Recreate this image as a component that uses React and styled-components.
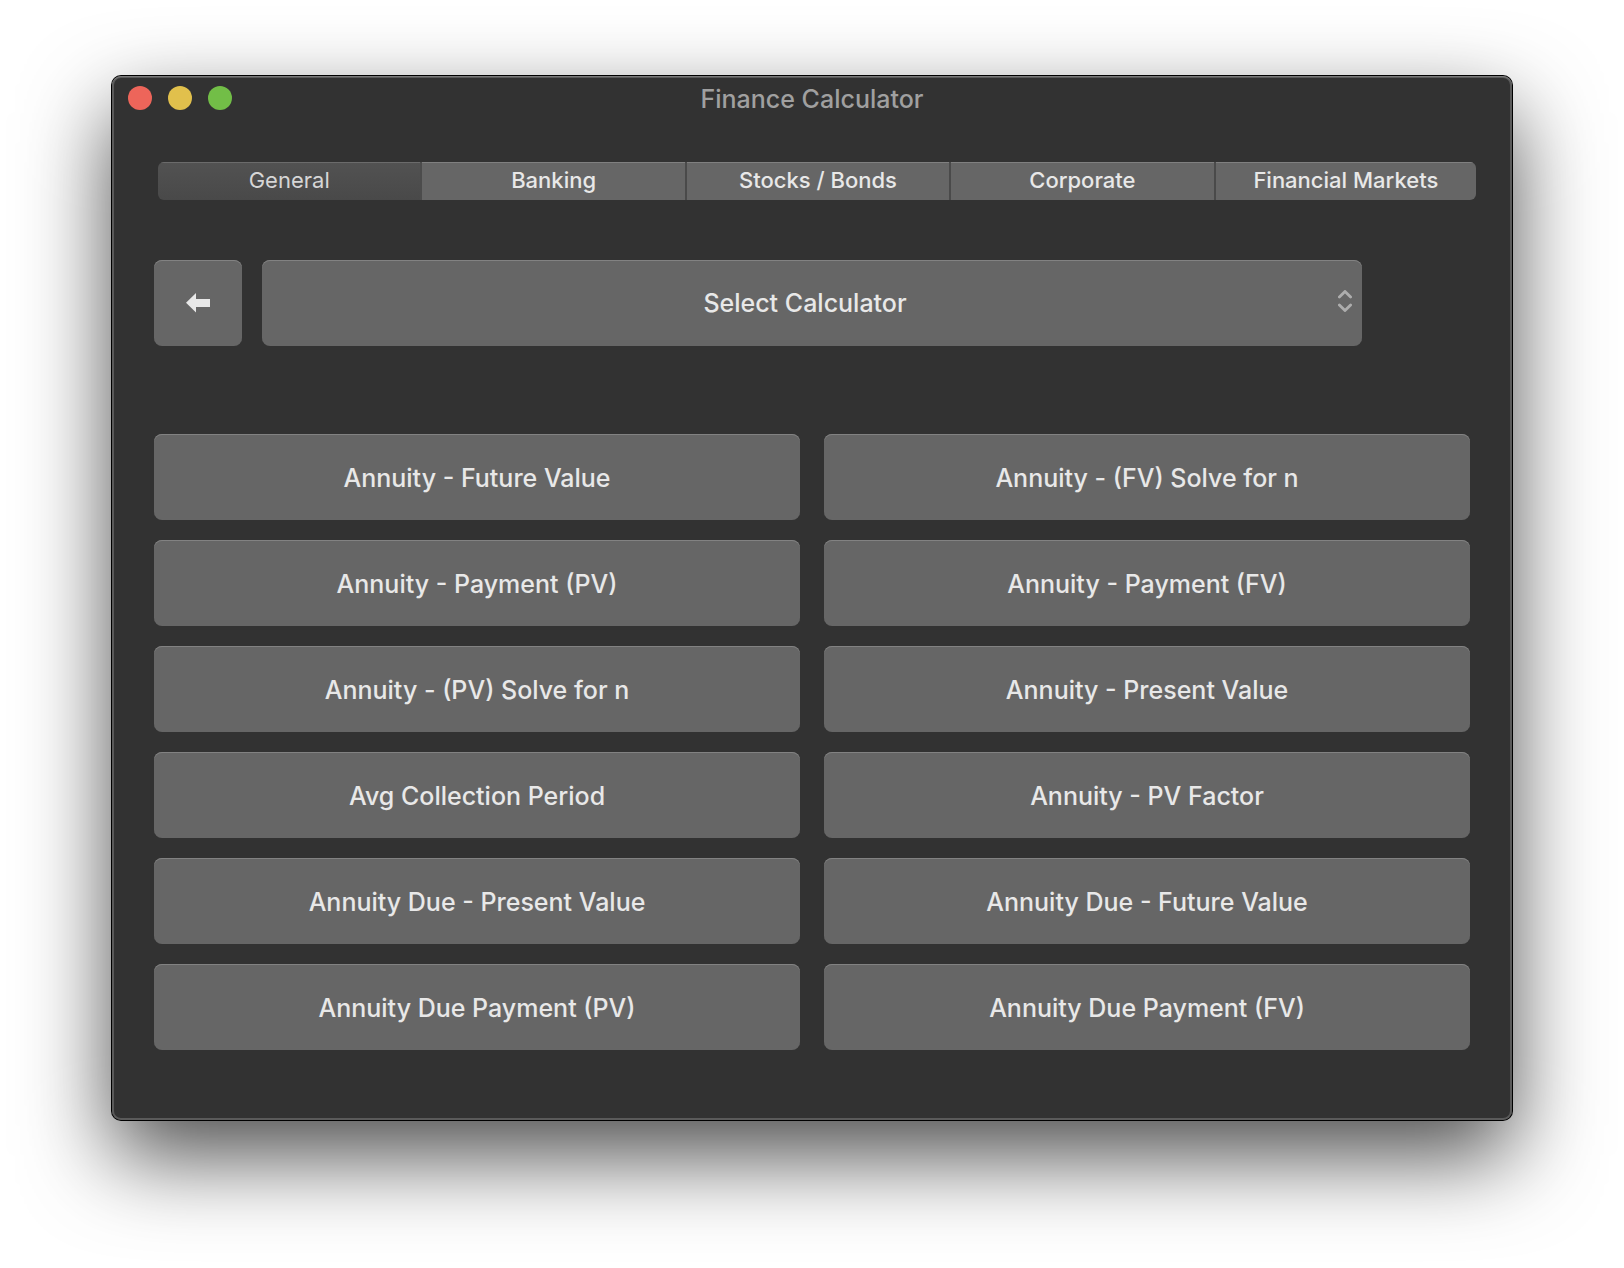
import React, { useState } from "react";
import styled, { createGlobalStyle } from "styled-components";

const GlobalStyle = createGlobalStyle`
  *, *::before, *::after { box-sizing: border-box; }
  body {
    margin: 0;
    background: #ffffff;
    font-family: Inter, "Liberation Sans", sans-serif;
    -webkit-font-smoothing: antialiased;
  }
`;

const Desktop = styled.div`
  min-height: 100vh;
  padding: 76px 112px 148px;
  overflow: hidden;
`;

const Window = styled.main`
  padding-bottom: 70px;
  border-radius: 9px;
  background: #323232;
  box-shadow:
    inset 0 1px #7a7a7a,
    inset 0 0 0 2px #5a5a5a,
    0 0 0 1px #000000,
    0 36px 88px rgba(0, 0, 0, 0.7);
`;

const TitleBar = styled.header`
  display: grid;
  grid-template-columns: 1fr auto 1fr;
  align-items: center;
  height: 44px;
  padding: 0 16px;
`;

const WindowControls = styled.div`
  display: flex;
  gap: 16px;
`;

const WindowControl = styled.button`
  width: 24px;
  height: 24px;
  padding: 0;
  border: 0;
  border-radius: 50%;
  background: ${(p) => p.$color};
`;

const Title = styled.h1`
  margin: 0;
  padding-top: 2px;
  color: #a0a0a0;
  font-size: 25px;
  font-weight: 500;
  line-height: 30px;
`;

const Tabs = styled.div`
  display: flex;
  margin: 42px 36px 0 46px;
  border-radius: 6px;
  overflow: hidden;
`;

const Tab = styled.button`
  box-sizing: content-box;
  flex: 1 1 0;
  height: 36px;
  padding: 0 1px 2px;
  border: 0;
  border-right: 2px solid ${(p) => (p.$active ? "#4c4c4c" : "#4a4a4a")};
  background: ${(p) => (p.$active ? "linear-gradient(#525252, #494949)" : "#666666")};
  box-shadow: inset 0 1px ${(p) => (p.$active ? "#6b6b6b" : "#808080")};
  color: ${(p) => (p.$active ? "#d6d6d6" : "#e8e8e8")};
  font-family: inherit;
  font-size: 22px;
  font-weight: ${(p) => (p.$active ? 400 : 500)};
  line-height: 28px;

  &:last-child {
    padding: 0 0 2px;
    border-right: 0;
  }
`;

const Toolbar = styled.div`
  display: flex;
  gap: 20px;
  margin: 60px 150px 0 42px;
`;

const PushButton = styled.button`
  display: flex;
  align-items: center;
  justify-content: center;
  height: 86px;
  padding: 2px 16px 0;
  border: 0;
  border-radius: 8px;
  background: #666666;
  box-shadow: inset 0 1px #828282;
  color: #e8e8e8;
  font-family: inherit;
  font-size: 25px;
  font-weight: 500;
  line-height: 30px;
`;

const BackButton = styled(PushButton)`
  width: 88px;
  padding: 0;
`;

const PopUp = styled.label`
  position: relative;
  flex: 1;
`;

const PopUpSelect = styled.select`
  appearance: none;
  display: block;
  width: 100%;
  height: 86px;
  padding: 0 30px 0 16px;
  border: 0;
  border-radius: 8px;
  background: #666666;
  box-shadow: inset 0 1px #828282;
  color: #e8e8e8;
  font-family: inherit;
  font-size: 25px;
  font-weight: 500;
  line-height: 30px;
  text-align: center;
  text-align-last: center;
`;

const PopUpArrows = styled.svg`
  position: absolute;
  top: 30px;
  right: 10px;
  pointer-events: none;
`;

const CalculatorGrid = styled.section`
  display: grid;
  grid-template-columns: 1fr 1fr;
  gap: 20px 24px;
  margin: 88px 42px 0;
`;

const controls = [
  { label: "Close", color: "#ed655a" },
  { label: "Minimize", color: "#e1c04c" },
  { label: "Zoom", color: "#72be47" },
];

const tabs = ["General", "Banking", "Stocks / Bonds", "Corporate", "Financial Markets"];

const calculators = [
  "Annuity - Future Value",
  "Annuity - (FV) Solve for n",
  "Annuity - Payment (PV)",
  "Annuity - Payment (FV)",
  "Annuity - (PV) Solve for n",
  "Annuity - Present Value",
  "Avg Collection Period",
  "Annuity - PV Factor",
  "Annuity Due - Present Value",
  "Annuity Due - Future Value",
  "Annuity Due Payment (PV)",
  "Annuity Due Payment (FV)",
];

export default function App() {
  const [active, setActive] = useState(0);

  return (
    <>
      <GlobalStyle />
      <Desktop>
        <Window>
          <TitleBar>
            <WindowControls>
              {controls.map((c) => (
                <WindowControl key={c.label} type="button" aria-label={c.label} $color={c.color} />
              ))}
            </WindowControls>
            <Title>Finance Calculator</Title>
          </TitleBar>

          <Tabs role="tablist">
            {tabs.map((name, i) => (
              <Tab
                key={name}
                type="button"
                role="tab"
                aria-selected={i === active}
                $active={i === active}
                onClick={() => setActive(i)}
              >
                {name}
              </Tab>
            ))}
          </Tabs>

          <Toolbar>
            <BackButton type="button" aria-label="Back">
              <svg width="24" height="20" viewBox="0 0 24 20" aria-hidden="true">
                <path d="M0 9.8 10 0v6h14v8H10v5.6Z" fill="#e8e8e8" />
              </svg>
            </BackButton>
            <PopUp>
              <PopUpSelect aria-label="Calculator" defaultValue="">
                <option value="">Select Calculator</option>
                {calculators.map((name) => (
                  <option key={name}>{name}</option>
                ))}
              </PopUpSelect>
              <PopUpArrows width="14" height="22" viewBox="0 0 14 22" aria-hidden="true">
                <path
                  d="M1.4 7 7 1.4 12.6 7M1.4 15 7 20.6 12.6 15"
                  fill="none"
                  stroke="#adadad"
                  strokeWidth="2.8"
                  strokeLinecap="round"
                  strokeLinejoin="round"
                />
              </PopUpArrows>
            </PopUp>
          </Toolbar>

          <CalculatorGrid>
            {calculators.map((name) => (
              <PushButton key={name} type="button">
                {name}
              </PushButton>
            ))}
          </CalculatorGrid>
        </Window>
      </Desktop>
    </>
  );
}
